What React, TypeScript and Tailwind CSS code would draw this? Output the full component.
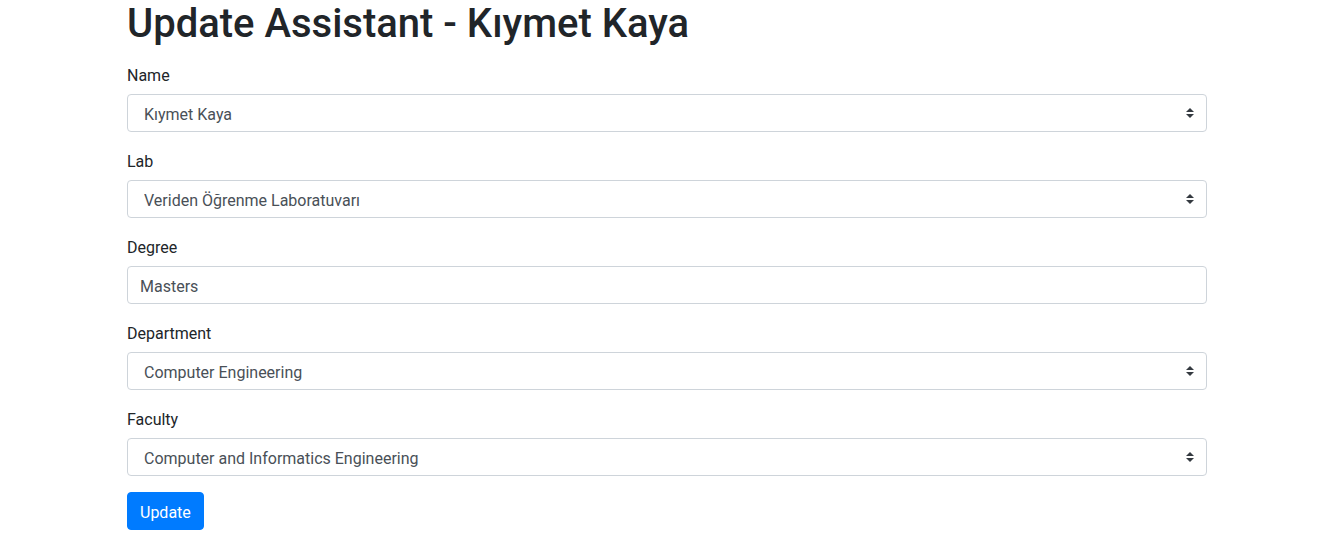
import React from "react"

const fields = [
    { id: "name", label: "Name", value: "Kıymet Kaya", select: true },
    { id: "lab", label: "Lab", value: "Veriden Öğrenme Laboratuvarı", select: true },
    { id: "degree", label: "Degree", value: "Masters", select: false },
    { id: "department", label: "Department", value: "Computer Engineering", select: true },
    { id: "faculty", label: "Faculty", value: "Computer and Informatics Engineering", select: true },
]

function SelectArrow() {
    return (
        <svg viewBox="0 0 4 5" className="pointer-events-none absolute right-[13px] top-[14px] h-[10px] w-[8px]">
            <path fill="#343a40" d="M2 0L0 2h4zm0 5L0 3h4z" />
        </svg>
    )
}

export default function App() {
    return (
        <div className="min-h-[543px] bg-white font-['Roboto',sans-serif] text-[#212529]">
            <div className="ml-[127px] w-[1080px]">
                <h1 className="mb-[14px] text-[40px] font-medium leading-[48px]">Update Assistant - Kıymet Kaya</h1>
                <form>
                    {fields.map((field) => (
                        <div key={field.id} className="mb-4">
                            <label htmlFor={field.id} className="mb-[6px] block pt-[2px] text-base leading-6">
                                {field.label}
                            </label>
                            {field.select ? (
                                <div className="relative">
                                    <select
                                        id={field.id}
                                        defaultValue={field.value}
                                        className="block h-[38px] w-full appearance-none rounded border border-[#ced4da] bg-white pl-[16px] pr-7 pt-[4px] pb-0 text-base leading-6 text-[#495057] outline-none"
                                    >
                                        <option value={field.value}>{field.value}</option>
                                    </select>
                                    <SelectArrow />
                                </div>
                            ) : (
                                <input
                                    id={field.id}
                                    defaultValue={field.value}
                                    className="block h-[38px] w-full rounded border border-[#ced4da] bg-white px-3 pt-[2px] text-base leading-6 text-[#495057] outline-none"
                                />
                            )}
                        </div>
                    ))}
                    <button
                        type="button"
                        className="h-[38px] rounded border border-[#007bff] bg-[#007bff] px-3 pt-[3px] text-base leading-6 text-white"
                    >
                        Update
                    </button>
                </form>
            </div>
        </div>
    )
}
